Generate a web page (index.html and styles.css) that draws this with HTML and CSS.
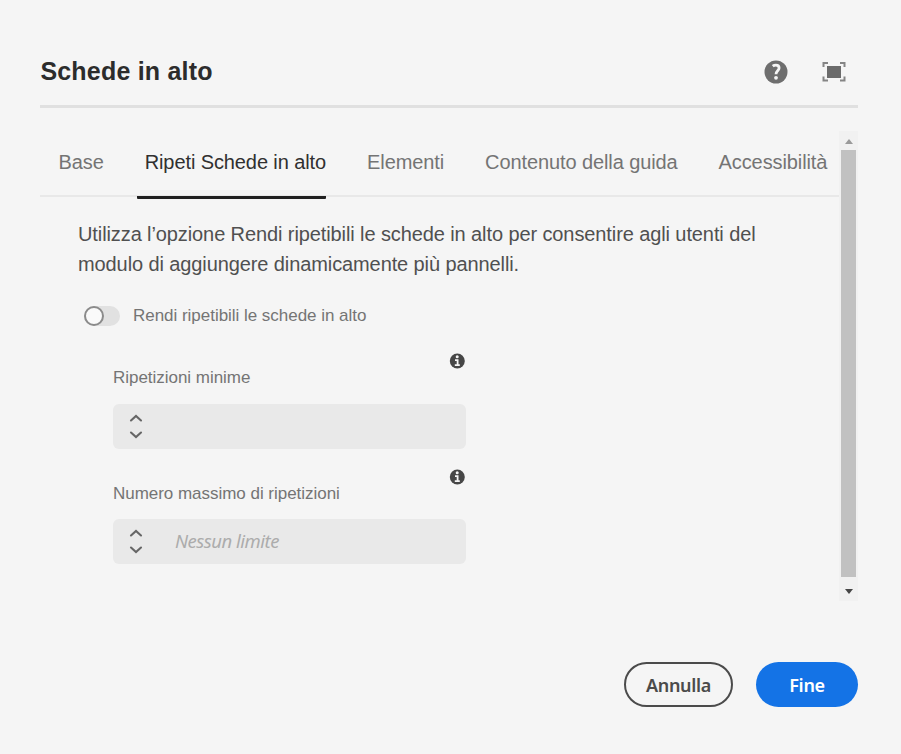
FILE: index.html
```html
<!DOCTYPE html>
<html lang="it">
<head>
<meta charset="utf-8">
<title>Schede in alto</title>
<link rel="stylesheet" href="styles.css">
</head>
<body>
<main class="dialog">
  <header class="header">
    <h1 class="title">Schede in alto</h1>
    <div class="actions">
      <svg class="icon" width="24" height="24" viewBox="0 0 24 24" role="img" aria-label="Guida"><circle cx="12" cy="12" r="11.500" fill="#6e6e6e"/><path d="M8.700 6.200C9.600 5.500 10.600 5.100 11.900 5.100c2 0 3.200 1.100 3.200 2.900 0 2.600-3.100 3-3.100 6.200" fill="none" stroke="#f5f5f5" stroke-width="2.800"/><circle cx="12" cy="17.800" r="1.900" fill="#f5f5f5"/></svg>
      <svg class="icon" width="24" height="22" viewBox="0 0 24 22" role="img" aria-label="Schermo intero"><path d="M1.500 6V2H6M18 2h4.500V6M1.500 15.500v4H6M18 19.500h4.500v-4" fill="none" stroke="#858585" stroke-width="2"/><rect x="5" y="5" width="14" height="12" fill="#6b6b6b"/></svg>
    </div>
  </header>
  <div class="viewport">
    <section class="content">
      <nav class="tabs">
        <a class="tab">Base</a>
        <a class="tab tab-active">Ripeti Schede in alto</a>
        <a class="tab">Elementi</a>
        <a class="tab">Contenuto della guida</a>
        <a class="tab">Accessibilità</a>
      </nav>
      <p class="intro">Utilizza l’opzione Rendi ripetibili le schede in alto per consentire agli utenti del<br>modulo di aggiungere dinamicamente più pannelli.</p>
      <div class="toggle"><span class="switch"><span class="knob"></span></span><span class="label">Rendi ripetibili le schede in alto</span></div>
      <div class="field">
        <svg class="info" width="16" height="16" viewBox="0 0 16 16"><circle cx="8.300" cy="8" r="7.500" fill="#464646"/><circle cx="8.200" cy="3.800" r="1.500" fill="#f5f5f5"/><path d="M6 7.200h2.600v5M5.800 12.100h5" fill="none" stroke="#f5f5f5" stroke-width="1.800"/></svg>
        <span class="label">Ripetizioni minime</span>
        <div class="input"><svg class="stepper" width="14" height="26" viewBox="0 0 14 26"><path d="M2 6.500 7 2l5 4.500M2 18.500 7 23l5-4.500" fill="none" stroke="#666" stroke-width="2.100" stroke-linecap="round"/></svg></div>
      </div>
      <div class="field field-max">
        <svg class="info" width="16" height="16" viewBox="0 0 16 16"><circle cx="8.300" cy="8" r="7.500" fill="#464646"/><circle cx="8.200" cy="3.800" r="1.500" fill="#f5f5f5"/><path d="M6 7.200h2.600v5M5.800 12.100h5" fill="none" stroke="#f5f5f5" stroke-width="1.800"/></svg>
        <span class="label">Numero massimo di ripetizioni</span>
        <div class="input"><svg class="stepper" width="14" height="26" viewBox="0 0 14 26"><path d="M2 6.500 7 2l5 4.500M2 18.500 7 23l5-4.500" fill="none" stroke="#666" stroke-width="2.100" stroke-linecap="round"/></svg><span class="placeholder">Nessun limite</span></div>
      </div>
    </section>
    <div class="scrollbar">
      <svg class="arrow-up" width="8" height="5" viewBox="0 0 8 5"><path d="M0 5 4 0l4 5z" fill="#9a9a9a"/></svg>
      <div class="thumb"></div>
      <svg class="arrow-down" width="8" height="5" viewBox="0 0 8 5"><path d="M0 0h8L4 5z" fill="#464646"/></svg>
    </div>
  </div>
  <footer class="footer">
    <button class="button cancel">Annulla</button>
    <button class="button done">Fine</button>
  </footer>
</main>
</body>
</html>
```
FILE: styles.css
```css
* { box-sizing: border-box; }
body { margin: 0; background: #f5f5f5; font-family: "Liberation Sans", Arial, sans-serif; }
.dialog { width: 901px; height: 754px; padding: 38px 43px 0 40px; overflow: hidden; }
.header { display: flex; justify-content: space-between; height: 70px; border-bottom: 3px solid #e0e0e0; }
.title { margin: 18px 0 0 .4px; font-size: 25px; line-height: 30px; letter-spacing: .2px; color: #2c2c2c; }
.actions { display: flex; align-items: center; gap: 34px; height: 24px; margin: 22px 12px 0 0; }
.icon, .info, .stepper { display: block; flex: none; }
.viewport { display: flex; height: 470px; margin-top: 23px; }
.content { width: 799px; }
.tabs { display: flex; height: 66px; padding-left: 18.5px; gap: 41px; border-bottom: 2px solid #e8e8e8; white-space: nowrap; }
.tab { height: 67.5px; padding-top: 19px; font-size: 20px; line-height: 24px; letter-spacing: -.1px; color: #747474; }
.tab-active { margin-left: -8px; padding-left: 8px; border-bottom: 3px solid #202020; border-radius: 1px; color: #303030; }
.intro { margin: 22px 0 0 38px; font-size: 20px; line-height: 30px; letter-spacing: -.1px; color: #505050; white-space: nowrap; }
.toggle { display: flex; align-items: center; gap: 13px; height: 22px; margin: 26px 0 0 44px; }
.switch { width: 36px; height: 20px; border-radius: 10px; background: #e1e1e1; }
.knob { display: block; width: 20px; height: 20px; border: 2px solid #8b8b8b; border-radius: 50%; background: #fafafa; }
.label { font-size: 17px; line-height: 20px; letter-spacing: -.03px; color: #747474; white-space: nowrap; }
.field { display: flex; flex-direction: column; width: 353px; margin: 26px 0 0 73px; }
.field-max { margin-top: 20px; }
.info { align-self: flex-end; margin-right: 1px; margin-bottom: -1px; }
.input { display: flex; align-items: center; height: 45px; margin-top: 16px; padding-left: 16px; gap: 32px; border-radius: 6px; background: #e9e9e9; }
.field-max .input { margin-top: 15px; }
.placeholder { margin-top: -1px; font-family: "Noto Sans", sans-serif; font-size: 18.5px; font-style: italic; line-height: 24px; letter-spacing: -.5px; color: #acacac; }
.scrollbar { display: flex; flex-direction: column; align-items: center; width: 19px; height: 470px; background: #f1f1f1; }
.arrow-up { margin-top: 8px; }
.thumb { width: 15px; height: 427px; margin-top: 6px; background: #c1c1c1; }
.arrow-down { margin-top: 12px; }
.footer { display: flex; justify-content: flex-end; gap: 23px; margin-top: 61px; }
.button { height: 45px; padding: 0; border-radius: 23px; font-family: "Noto Sans", sans-serif; font-size: 18px; font-weight: 600; line-height: 24px; letter-spacing: -.3px; }
.cancel { width: 109px; border: 2px solid #4b4b4b; background: transparent; color: #4b4b4b; }
.done { width: 102px; border: 0; background: #1473e6; color: #fff; }
```
